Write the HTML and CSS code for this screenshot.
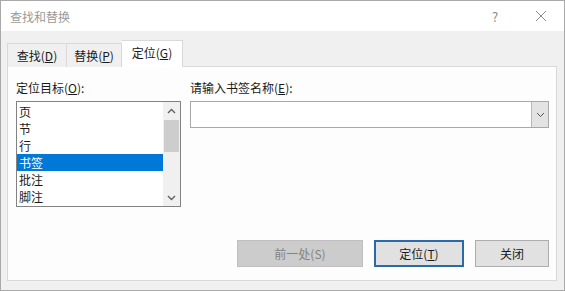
FILE: index.html
```html
<!DOCTYPE html>
<html lang="zh">
<head>
<meta charset="utf-8">
<title>查找和替换</title>
<link rel="stylesheet" href="styles.css">
</head>
<body>
<div class="window">
  <div class="titlebar">
    <span class="title">查找和替换</span>
    <span class="tb-btn help">?</span>
    <span class="tb-btn close">
      <svg width="12" height="12" viewBox="0 0 12 12"><path d="M1 1L11 11M11 1L1 11" stroke="#8a8a8a" stroke-width="1" fill="none"/></svg>
    </span>
  </div>
  <div class="body">
    <div class="tabs">
      <div class="tab first">查找(<u>D</u>)</div>
      <div class="tab second">替换(<u>P</u>)</div>
      <div class="tab active">定位(<u>G</u>)</div>
    </div>
    <div class="panel">
      <div class="fields">
        <div class="col-left">
          <div class="label">定位目标(<u>O</u>):</div>
          <div class="listbox">
            <ul class="items">
              <li>页</li>
              <li>节</li>
              <li>行</li>
              <li class="selected">书签</li>
              <li>批注</li>
              <li>脚注</li>
            </ul>
            <div class="scrollbar">
              <div class="arrow"><svg width="9" height="6" viewBox="0 0 9 6"><path d="M1 5L4.5 1.5L8 5" stroke="#606060" stroke-width="1.4" fill="none"/></svg></div>
              <div class="track"><div class="thumb"></div></div>
              <div class="arrow"><svg width="9" height="6" viewBox="0 0 9 6"><path d="M1 1L4.5 4.5L8 1" stroke="#606060" stroke-width="1.4" fill="none"/></svg></div>
            </div>
          </div>
        </div>
        <div class="col-right">
          <div class="label">请输入书签名称(<u>E</u>):</div>
          <div class="combo">
            <div class="combo-input"></div>
            <div class="combo-btn"><svg width="9" height="6" viewBox="0 0 9 6"><path d="M1 1L4.5 4.5L8 1" stroke="#555" stroke-width="1" fill="none"/></svg></div>
          </div>
        </div>
      </div>
      <div class="buttons">
        <div class="btn disabled">前一处(S)</div>
        <div class="btn default">定位(<u>T</u>)</div>
        <div class="btn">关闭</div>
      </div>
    </div>
  </div>
</div>
</body>
</html>
```

FILE: styles.css
```css
* { box-sizing: border-box; }
html, body { margin: 0; padding: 0; }
body {
  font-family: "Noto Sans CJK SC", "Noto Sans", sans-serif;
  font-size: 12px;
  color: #1a1a1a;
  background: #fff;
}
u { text-decoration: underline; text-underline-offset: 1px; }
.window {
  width: 565px;
  height: 291px;
  border: 1px solid #a9a9a9;
  display: flex;
  flex-direction: column;
  background: #f0f0f0;
}
.titlebar {
  height: 30px;
  background: #fff;
  display: flex;
  align-items: center;
  padding-left: 9px;
  flex: none;
}
.title {
  color: #9a9a9a;
  font-size: 12px;
  flex: 1;
}
.tb-btn {
  color: #8a8a8a;
  display: flex;
  align-items: center;
  justify-content: center;
}
.help { width: 20px; margin-right: 26px; font-size: 13px; }
.close { width: 20px; margin-right: 13px; }
.body {
  flex: 1;
  display: flex;
  flex-direction: column;
  padding: 9px 7px 9px 6px;
}
.tabs {
  display: flex;
  align-items: flex-end;
  height: 27px;
  position: relative;
  z-index: 1;
  margin-bottom: -1px;
}
.tab {
  height: 24px;
  border: 1px solid #d9d9d9;
  border-bottom: none;
  background: #f0f0f0;
  display: flex;
  align-items: center;
  justify-content: center;
  line-height: 1;
}
.tab.first { width: 59px; border-right: none; }
.tab.second { width: 56px; }
.tab.active {
  width: 61px;
  height: 27px;
  background: #fff;
  border-left: none;
  padding-bottom: 2px;
}
.panel {
  flex: 1;
  background: #fdfdfd;
  border: 1px solid #d9d9d9;
  display: flex;
  flex-direction: column;
  padding: 13px 7px 13px 8px;
}
.fields {
  display: flex;
  gap: 9px;
}
.col-left { width: 165px; flex: none; }
.col-right { flex: 1; }
.label {
  height: 21px;
  line-height: 16px;
}
.listbox {
  height: 106px;
  border: 1px solid #828282;
  background: #fff;
  display: flex;
}
.items {
  list-style: none;
  margin: 0;
  padding: 1px 0 0;
  flex: 1;
}
.items li {
  height: 17px;
  line-height: 17px;
  padding-left: 2px;
}
.items li.selected {
  background: #0078d7;
  color: #fff;
}
.scrollbar {
  width: 17px;
  background: #f0f0f0;
  display: flex;
  flex-direction: column;
}
.arrow {
  height: 17px;
  display: flex;
  align-items: center;
  justify-content: center;
}
.track { flex: 1; padding: 0 1px; }
.thumb {
  height: 32px;
  margin-top: 1px;
  background: #cdcdcd;
}
.combo {
  height: 27px;
  border: 1px solid #a8a8a8;
  background: #fff;
  display: flex;
}
.combo-input { flex: 1; }
.combo-btn {
  width: 17px;
  background: #e3e3e3;
  border-left: 1px solid #b8b8b8;
  display: flex;
  align-items: center;
  justify-content: center;
}
.buttons {
  margin-top: auto;
  display: flex;
  justify-content: flex-end;
  gap: 11px;
}
.btn {
  height: 27px;
  width: 74px;
  background: #e1e1e1;
  border: 1px solid #adadad;
  display: flex;
  align-items: center;
  justify-content: center;
}
.btn.disabled {
  width: 126px;
  background: #cccccc;
  border-color: #bfbfbf;
  color: #838383;
}
.btn.default {
  width: 90px;
  border: 2px solid #2a6aa8;
}
```
